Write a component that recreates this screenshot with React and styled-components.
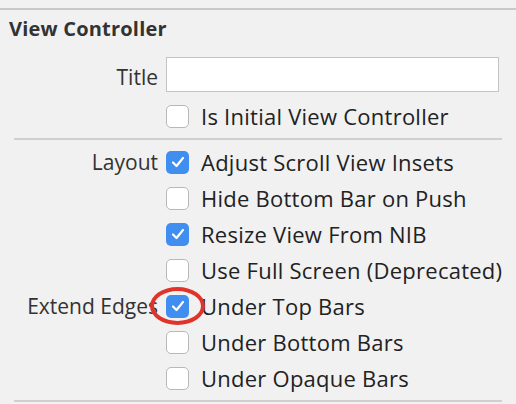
import React from "react";
import styled, { createGlobalStyle } from "styled-components";

const GlobalStyle = createGlobalStyle`
  html, body {
    margin: 0;
    padding: 0;
    background: #f1f1f1;
  }
  body {
    font-family: "Open Sans", "Liberation Sans", Arial, sans-serif;
    color: #222;
  }
`;

const Panel = styled.div`
  width: 516px;
  height: 404px;
  overflow: hidden;
  padding-top: 8px;
  box-sizing: border-box;
`;

const TopRule = styled.div`
  height: 2px;
  background: #c9c9c9;
`;

const Header = styled.div`
  font-size: 20px;
  font-weight: bold;
  letter-spacing: 0.2px;
  color: #333;
  padding: 7px 0 0 9px;
  height: 47px;
  line-height: 24px;
  box-sizing: border-box;
`;

const Section = styled.div`
  display: grid;
  grid-template-columns: 158px 1fr;
  column-gap: 8px;
  align-items: center;
  padding-right: 16px;
`;

const Label = styled.div`
  text-align: right;
  font-size: 21px;
  color: #333;
  white-space: nowrap;
  padding-top: ${(p) => p.$nudge || 0}px;
`;

const Row = styled.div`
  height: ${(p) => p.$h || 36}px;
  margin-top: ${(p) => p.$mt || 0}px;
  display: flex;
  align-items: center;
  gap: 12px;
  font-size: 22px;
  letter-spacing: 0.25px;
  white-space: nowrap;
`;

const TextField = styled.div`
  width: 333px;
  height: 35px;
  box-sizing: border-box;
  background: #fff;
  border: 1px solid #c4c4c4;
`;

const Rule = styled.div`
  grid-column: 1 / -1;
  height: 2px;
  background: #cfcfcf;
  margin: ${(p) => p.$m || "0"};
  margin-left: 14px;
`;

const Box = styled.span`
  position: relative;
  flex: none;
  width: 23px;
  height: 23px;
  box-sizing: border-box;
  border-radius: 5px;
  display: flex;
  align-items: center;
  justify-content: center;
  background: ${(p) => (p.$on ? "#3f8ef0" : "#fff")};
  border: ${(p) => (p.$on ? "none" : "1px solid #b8b8b8")};
`;

const Circle = styled.span`
  position: absolute;
  left: -16px;
  top: -8px;
  width: 55px;
  height: 38px;
  box-sizing: border-box;
  border: 4px solid #e0342b;
  border-radius: 50%;
  pointer-events: none;
`;

const Check = ({ on, circled }) => (
  <Box $on={on}>
    {on && (
      <svg width="14" height="12" viewBox="0 0 14 12">
        <path
          d="M2 6.5 L5.5 10 L12 2"
          fill="none"
          stroke="#fff"
          strokeWidth="2.2"
          strokeLinecap="round"
          strokeLinejoin="round"
        />
      </svg>
    )}
    {circled && <Circle />}
  </Box>
);

const layout = [
  { label: "Layout", text: "Adjust Scroll View Insets", on: true },
  { text: "Hide Bottom Bar on Push" },
  { text: "Resize View From NIB", on: true },
  { text: "Use Full Screen (Deprecated)" },
  { label: "Extend Edges", text: "Under Top Bars", on: true, circled: true },
  { text: "Under Bottom Bars" },
  { text: "Under Opaque Bars" },
];

const App = () => (
  <Panel>
    <GlobalStyle />
    <TopRule />
    <Header>View Controller</Header>
    <Section>
      <Label $nudge={4}>Title</Label>
      <Row $h={35}>
        <TextField />
      </Row>
      <div />
      <Row $h={24} $mt={12}>
        <Check />
        Is Initial View Controller
      </Row>
      <Rule $m="10px 0 4px 0" />
      {layout.map((item) => (
        <React.Fragment key={item.text}>
          <Label>{item.label || ""}</Label>
          <Row>
            <Check on={item.on} circled={item.circled} />
            {item.text}
          </Row>
        </React.Fragment>
      ))}
      <Rule $m="4px 0 0 0" />
    </Section>
  </Panel>
);

export default App;
